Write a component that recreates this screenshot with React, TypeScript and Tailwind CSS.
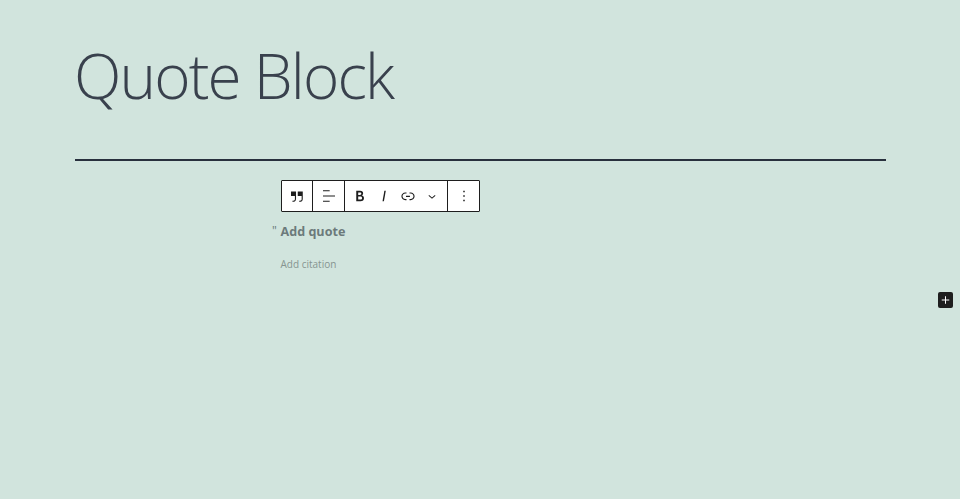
const ICON = 'w-[18px] h-[18px] fill-current'

function ToolBtn({ children, w = 'w-6' }: { children: React.ReactNode; w?: string }) {
  return <button className={`${w} h-full flex items-center justify-center text-[#1e1e1e]`}>{children}</button>
}

export default function App() {
  return (
    <div className="relative h-[499px] w-[960px] overflow-hidden bg-[#d1e4dd] font-['Open_Sans',sans-serif]">
      {/* Title */}
      <div className="px-[75px] pt-[30px]">
        <h1 className="h-[129px] -ml-[1px] text-[62px] leading-[90px] tracking-[-1.9px] font-light text-[#39414d]">Quote Block</h1>
        <div className="h-[2px] w-[811px] bg-[#28303d]" />
      </div>

      {/* Block */}
      <div className="ml-[281px] mt-[19px] w-[400px]">
        <div className="flex h-[32px] w-[199px] border border-[#1e1e1e] rounded-[1px] bg-white">
          <div className="flex w-[31px] items-center justify-center border-r border-[#1e1e1e]">
            <ToolBtn>
              <svg viewBox="0 0 24 24" className={ICON}><path d="M13 6v6h5.2v4c0 .8-.2 1.4-.5 1.7-.6.6-1.6.6-2.5.5h-.3v1.5h.5c1 0 2.3-.1 3.3-1 .6-.6 1-1.6 1-2.8V6H13zm-9 6h5.2v4c0 .8-.2 1.4-.5 1.7-.6.6-1.6.6-2.5.5h-.3v1.5h.5c1 0 2.3-.1 3.3-1 .6-.6 1-1.6 1-2.8V6H4v6z" /></svg>
            </ToolBtn>
          </div>
          <div className="flex w-[32px] items-center justify-center border-r border-[#1e1e1e]">
            <ToolBtn>
              <svg viewBox="0 0 24 24" className={ICON}><path d="M4 19.8h8.9v-1.5H4v1.5zm8.9-15.6H4v1.5h8.9V4.2zm-8.9 7v1.5h16v-1.5H4z" /></svg>
            </ToolBtn>
          </div>
          <div className="flex w-[103px] items-center justify-center border-r border-[#1e1e1e]">
            <ToolBtn>
              <svg viewBox="0 0 24 24" className={ICON}><path d="M14.7 11.3c1-.6 1.5-1.6 1.5-3 0-2.3-1.3-3.4-4-3.4H7v14h5.8c1.4 0 2.5-.3 3.3-1 .8-.7 1.2-1.7 1.2-2.9.1-1.9-.8-3.1-2.6-3.7zm-5.1-4h2.3c.6 0 1.1.1 1.4.4.3.3.5.7.5 1.2s-.2 1-.5 1.2c-.3.3-.8.4-1.4.4H9.6V7.3zm4.6 9c-.4.3-1 .4-1.7.4H9.6v-3.9h2.9c.7 0 1.3.2 1.7.5.4.3.6.8.6 1.5s-.2 1.2-.6 1.5z" /></svg>
            </ToolBtn>
            <ToolBtn>
              <svg viewBox="0 0 24 24" className={ICON}><path d="M12.5 5L10 19h1.9l2.5-14z" /></svg>
            </ToolBtn>
            <ToolBtn>
              <svg viewBox="0 0 24 24" className={ICON}><path d="M15.6 7.2H14v1.5h1.6c2 0 3.7 1.7 3.7 3.7s-1.7 3.7-3.7 3.7H14v1.5h1.6c2.8 0 5.2-2.3 5.2-5.2 0-2.9-2.3-5.2-5.2-5.2zM4.7 12.4c0-2 1.7-3.7 3.7-3.7H10V7.2H8.4c-2.9 0-5.2 2.3-5.2 5.2 0 2.9 2.3 5.2 5.2 5.2H10v-1.5H8.4c-2 0-3.7-1.7-3.7-3.7zm4.6.9h5.3v-1.5H9.3v1.5z" /></svg>
            </ToolBtn>
            <ToolBtn>
              <svg viewBox="0 0 24 24" className={ICON}><path d="M17.5 11.6L12 16l-5.5-4.4.9-1.2L12 14l4.5-3.6 1 1.2z" transform="translate(12 13) scale(0.85) translate(-12 -13)" /></svg>
            </ToolBtn>
          </div>
          <div className="flex flex-1 items-center justify-center">
            <ToolBtn>
              <svg viewBox="0 0 24 24" className={ICON}><path d="M13 19h-2v-2h2v2zm0-6h-2v-2h2v2zm0-6h-2V5h2v2z" /></svg>
            </ToolBtn>
          </div>
        </div>

        {/* Quote */}
        <div className="relative mt-[9px]">
          <span className="absolute left-[-9px] top-[-1px] text-[12px] leading-[22px] text-[#6a7a7a]">"</span>
          <p className="-ml-[0.5px] text-[12.6px] leading-[22px] font-bold text-[#6c7a7b]">Add quote</p>
        </div>
        <p className="-ml-[0.5px] mt-[13px] text-[10px] leading-[16px] text-[#869490]">Add citation</p>
      </div>

      {/* Inserter */}
      <button className="absolute left-[938px] top-[292px] flex h-[16px] w-[15px] items-center justify-center rounded-[2px] bg-[#1e1e1e] text-white">
        <svg viewBox="0 0 24 24" className="h-[16px] w-[16px] fill-current"><path d="M18 11.2h-5.2V6h-1.6v5.2H6v1.6h5.2V18h1.6v-5.2H18z" /></svg>
      </button>
    </div>
  )
}
